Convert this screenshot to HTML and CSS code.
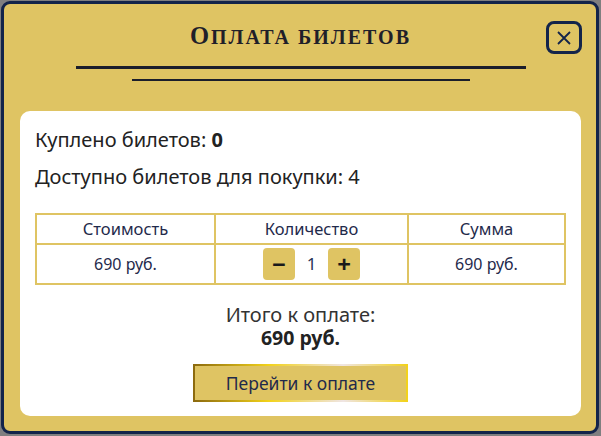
FILE: index.html
```html
<!DOCTYPE html>
<html lang="ru">
<head>
    <meta charset="UTF-8">
    <meta name="viewport" content="width=device-width, initial-scale=1.0">
    <title>Оплата билетов</title>
    <link rel="stylesheet" href="styles.css">
</head>
<body>

    <div class="modal">
        <button type="button" class="close" aria-label="Закрыть">
            <svg width="14" height="14" viewBox="0 0 14 14">
                <path d="M1 1 L13 13 M13 1 L1 13" stroke="#13244a" stroke-width="1.8" fill="none"/>
            </svg>
        </button>

        <h2 class="title">Оплата билетов</h2>
        <div class="line line-long"></div>
        <div class="line line-short"></div>

        <div class="card">
            <p class="info">Куплено билетов: <b>0</b></p>
            <p class="info">Доступно билетов для покупки: 4</p>

            <!-- Таблица с ценой и количеством -->
            <table class="tickets">
                <tr>
                    <th class="col-price">Стоимость</th>
                    <th class="col-qty">Количество</th>
                    <th>Сумма</th>
                </tr>
                <tr>
                    <td>690 руб.</td>
                    <td>
                        <div class="counter">
                            <button type="button" class="step">&minus;</button>
                            <span class="qty">1</span>
                            <button type="button" class="step">+</button>
                        </div>
                    </td>
                    <td>690 руб.</td>
                </tr>
            </table>

            <div class="total">Итого к оплате:</div>
            <div class="total total-sum">690 руб.</div>

            <button type="button" class="pay">Перейти к оплате</button>
        </div>
    </div>

</body>
</html>
```

FILE: styles.css
```css
body {
    margin: 0;
    background-color: #7f7f80;
    font-family: "Noto Sans", "Open Sans", sans-serif;
}
.modal {
    position: relative;
    box-sizing: border-box;
    width: 598px;
    margin: 1px;
    padding: 18px 15px 15px 16px;
    background-color: #dfc463;
    border: 3px solid #13244a;
    border-radius: 9px;
}
.close {
    position: absolute;
    top: 17px;
    right: 14px;
    width: 36px;
    height: 33px;
    padding: 0;
    border: 3px solid #13244a;
    border-radius: 8px;
    background: transparent;
    display: flex;
    align-items: center;
    justify-content: center;
    cursor: pointer;
}
.title {
    margin: 0;
    text-align: center;
    font-family: "Liberation Serif", serif;
    text-transform: uppercase;
    font-size: 20px;
    line-height: 28px;
    letter-spacing: 2px;
    color: #1f2029;
}
.title::first-letter {
    font-size: 24.5px;
}
.line {
    margin: 0 auto;
    background-color: #1b1e2b;
}
.line-long {
    width: 450px;
    height: 3px;
    margin-top: 15px;
}
.line-short {
    width: 338px;
    height: 2px;
    margin-top: 10px;
}
.card {
    margin-top: 30px;
    background-color: #fff;
    border-radius: 10px;
    padding: 16px 15px 14px;
}
.info {
    margin: 0 0 12px;
    font-size: 20px;
    line-height: 25px;
    color: #222;
}
.tickets {
    width: 100%;
    margin-top: 24px;
    border-collapse: collapse;
    color: #1f2a4b;
}
.tickets th, .tickets td {
    border: 2px solid #dfc463;
    text-align: center;
    font-weight: normal;
}
.tickets th {
    padding: 4px 5px;
    font-size: 16.5px;
    line-height: 20px;
}
.tickets td {
    padding: 3px 5px;
    font-size: 16px;
    line-height: 20px;
    vertical-align: middle;
}
.col-price {
    width: 167px;
}
.col-qty {
    width: 181px;
}
.counter {
    display: flex;
    align-items: center;
    justify-content: center;
}
.step {
    width: 32px;
    height: 32px;
    padding: 0;
    border: none;
    border-radius: 4px;
    background-color: #dfc463;
    font-family: "Noto Sans", sans-serif;
    font-size: 24px;
    font-weight: bold;
    line-height: 32px;
    color: #1a1a1a;
    cursor: pointer;
}
.qty {
    width: 33px;
    text-align: center;
    font-size: 17px;
    color: #2a3555;
}
.total {
    text-align: center;
    font-size: 20px;
    line-height: 23px;
    color: #333;
}
.total:first-of-type {
    margin-top: 18px;
}
.total-sum {
    font-size: 19.5px;
    font-weight: bold;
    color: #222;
}
.pay {
    display: block;
    width: 215px;
    height: 38px;
    margin: 15px auto 0;
    padding: 0;
    background-color: #dfc463;
    border: 2px solid;
    border-image: linear-gradient(to right, #8c6a0e, #f2d21a 35%, #efe5e4 70%, #f2d21a) 1;
    font-family: "Noto Sans", sans-serif;
    font-size: 17.5px;
    color: #1f2a4b;
    cursor: pointer;
}
```
